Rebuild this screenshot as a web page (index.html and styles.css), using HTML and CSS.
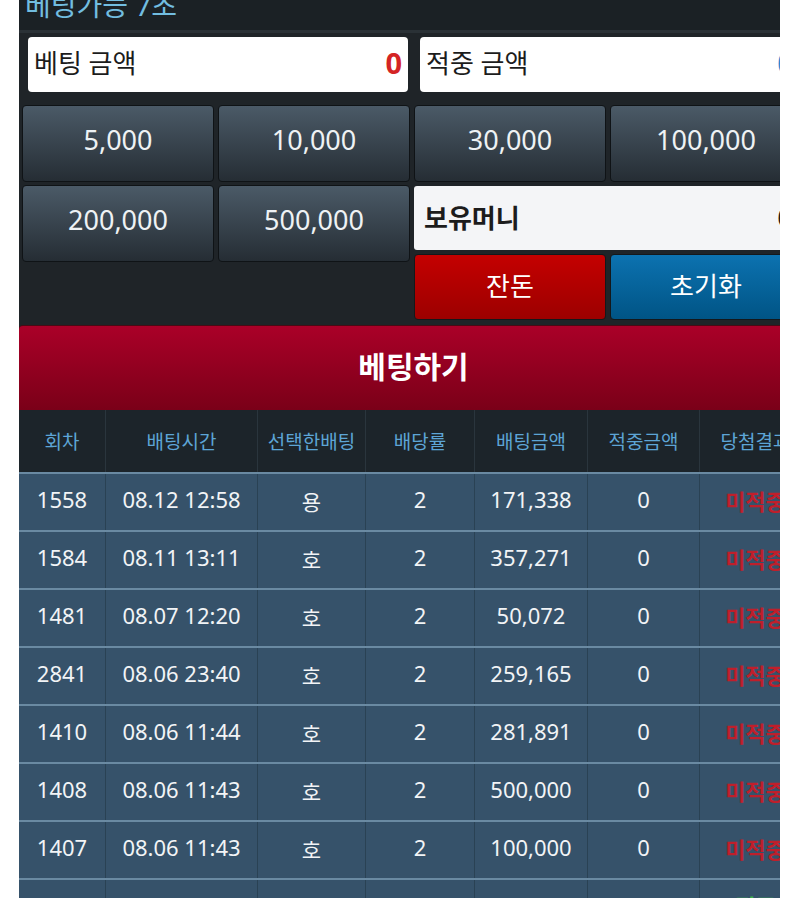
FILE: index.html
```html
<!DOCTYPE html>
<html lang="ko">
<head>
<meta charset="utf-8">
<link rel="stylesheet" href="styles.css">
</head>
<body>
<div class="frame">
  <div class="panel">
    <div class="topbar"><span class="timer">베팅가능 7초</span></div>
    <div class="amounts">
      <div class="field"><span>베팅 금액</span><b class="red">0</b></div>
      <div class="field"><span>적중 금액</span><b class="blue">0</b></div>
    </div>
    <div class="keypad">
      <button class="chip">5,000</button>
      <button class="chip">10,000</button>
      <button class="chip">30,000</button>
      <button class="chip">100,000</button>
      <button class="chip">200,000</button>
      <button class="chip">500,000</button>
      <div class="side">
        <div class="money"><span>보유머니</span><b>0</b></div>
        <div class="actions">
          <button class="act change">잔돈</button>
          <button class="act reset">초기화</button>
        </div>
      </div>
    </div>
    <button class="bet">베팅하기</button>
    <table class="history">
      <thead>
        <tr><th class="c1">회차</th><th class="c2">배팅시간</th><th class="c3">선택한배팅</th><th class="c4">배당률</th><th class="c5">배팅금액</th><th class="c6">적중금액</th><th class="c7">당첨결과</th></tr>
      </thead>
      <tbody>
        <tr><td>1558</td><td>08.12 12:58</td><td class="pick">용</td><td>2</td><td>171,338</td><td>0</td><td class="lose">미적중</td></tr>
        <tr><td>1584</td><td>08.11 13:11</td><td class="pick">호</td><td>2</td><td>357,271</td><td>0</td><td class="lose">미적중</td></tr>
        <tr><td>1481</td><td>08.07 12:20</td><td class="pick">호</td><td>2</td><td>50,072</td><td>0</td><td class="lose">미적중</td></tr>
        <tr><td>2841</td><td>08.06 23:40</td><td class="pick">호</td><td>2</td><td>259,165</td><td>0</td><td class="lose">미적중</td></tr>
        <tr><td>1410</td><td>08.06 11:44</td><td class="pick">호</td><td>2</td><td>281,891</td><td>0</td><td class="lose">미적중</td></tr>
        <tr><td>1408</td><td>08.06 11:43</td><td class="pick">호</td><td>2</td><td>500,000</td><td>0</td><td class="lose">미적중</td></tr>
        <tr><td>1407</td><td>08.06 11:43</td><td class="pick">호</td><td>2</td><td>100,000</td><td>0</td><td class="lose">미적중</td></tr>
        <tr><td>891</td><td>08.06 09:15</td><td class="pick">용</td><td>2</td><td>436,948</td><td>872,984</td><td class="win">적중</td></tr>
      </tbody>
    </table>
  </div>
</div>
</body>
</html>
```

FILE: styles.css
```css
html, body {
  margin: 0;
  padding: 0;
  background: #ffffff;
}
body {
  font-family: "Noto Sans", "Noto Sans CJK KR", sans-serif;
  height: 898px;
  overflow: hidden;
}
.frame {
  margin-left: 19px;
  width: 761px;
  height: 898px;
  overflow: hidden;
  background: #1f2428;
}
.panel {
  width: 792px;
}
.topbar {
  height: 30px;
  background: #1b2125;
  border-bottom: 3px solid #2a3136;
  overflow: hidden;
}
.timer {
  display: block;
  margin-top: -10px;
  margin-left: 6px;
  font-size: 28px;
  line-height: 30px;
  color: #72bde0;
}
.amounts {
  display: grid;
  grid-template-columns: 380px 380px;
  gap: 12px;
  padding: 4px 0 0 9px;
}
.field {
  height: 55px;
  box-sizing: border-box;
  background: #ffffff;
  border-radius: 4px;
  display: flex;
  align-items: center;
  justify-content: space-between;
  padding: 0 6px 5px 6px;
  font-size: 26px;
  color: #1c1c1c;
}
.field b {
  font-size: 29px;
  font-weight: 700;
}
.red { color: #d42424; }
.blue { color: #2d86d2; }
.keypad {
  display: grid;
  grid-template-columns: repeat(4, 192px);
  column-gap: 4px;
  row-gap: 3px;
  padding: 13px 0 0 3px;
  align-items: start;
}
button {
  font-family: inherit;
  margin: 0;
  cursor: pointer;
}
.chip {
  height: 77px;
  box-sizing: border-box;
  border: 1px solid #0f1316;
  border-radius: 4px;
  background: linear-gradient(#4b5a67, #252d34);
  color: #eef2f4;
  font-size: 27px;
  padding: 0 0 9px 0;
}
.side {
  grid-column: span 2;
  display: flex;
  flex-direction: column;
  gap: 4px;
  padding-top: 1px;
}
.money {
  height: 64px;
  box-sizing: border-box;
  background: #f4f5f7;
  border-radius: 3px;
  display: flex;
  align-items: center;
  justify-content: space-between;
  padding: 0 10px 2px 10px;
  font-size: 26px;
  color: #1c1c1c;
}
.money span { font-weight: 700; }
.money b { font-weight: 400; }
.actions {
  display: grid;
  grid-template-columns: 192px 192px;
  gap: 4px;
}
.act {
  height: 66px;
  box-sizing: border-box;
  border: 1px solid #14181b;
  border-radius: 4px;
  color: #ffffff;
  font-size: 26px;
  padding: 0 0 5px 0;
}
.change { background: linear-gradient(#c40000, #9c0000); }
.reset { background: linear-gradient(#0c72b0, #005485); }
.bet {
  display: block;
  width: 789px;
  height: 85px;
  box-sizing: border-box;
  margin-top: 5px;
  border: 0;
  border-top: 1px solid #4a0a14;
  border-radius: 4px 4px 0 0;
  background: linear-gradient(#aa0028, #7a0018);
  color: #ffffff;
  font-size: 30px;
  font-weight: 700;
  padding: 0 0 6px 0;
}
.history {
  width: 792px;
  border-collapse: collapse;
  table-layout: fixed;
}
.history th {
  height: 62px;
  padding: 0;
  background: #1c242a;
  color: #5da5d6;
  font-size: 19px;
  font-weight: 400;
  border-left: 1px solid #2a353d;
  white-space: nowrap;
  overflow: hidden;
}
.history th:first-child, .history td:first-child { border-left: 0; }
.c1 { width: 86px; }
.c2 { width: 151px; }
.c3 { width: 107px; }
.c4 { width: 108px; }
.c5 { width: 112px; }
.c6 { width: 111px; }
.history td {
  height: 58px;
  box-sizing: border-box;
  background: #36526a;
  color: #f2f4f6;
  font-size: 22px;
  text-align: center;
  border-top: 2px solid #6a8aa2;
  border-left: 1px solid #2a4254;
  white-space: nowrap;
  overflow: hidden;
  padding: 0 0 7px 0;
}
.history td.pick { padding: 0 0 2px 0; font-size: 21px; }
.history td.lose {
  color: #bf1f2b;
  font-weight: 700;
  font-size: 22px;
  padding: 0 0 4px 0;
}
.history td.win {
  color: #3fb24a;
  font-weight: 700;
  font-size: 22px;
}
```
